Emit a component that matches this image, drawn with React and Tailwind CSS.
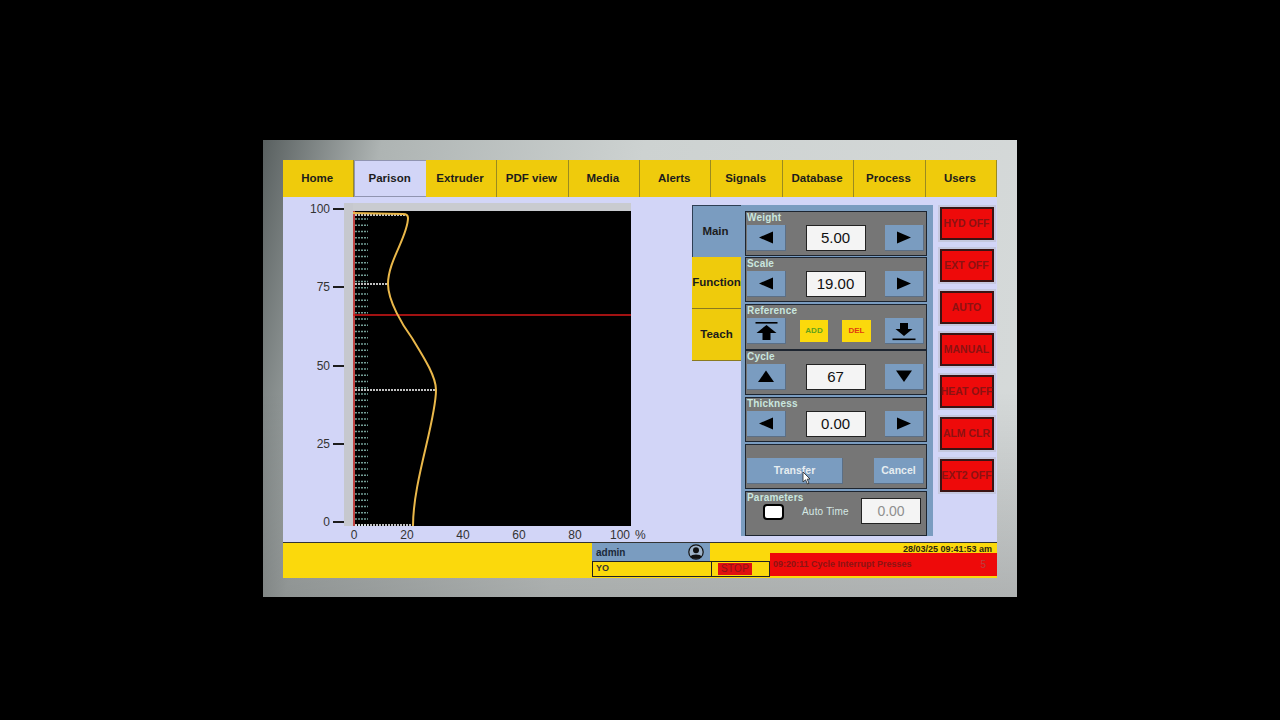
import React from 'react';

const tabs = ['Home', 'Parison', 'Extruder', 'PDF view', 'Media', 'Alerts', 'Signals', 'Database', 'Process', 'Users'];
const sideButtons = ['HYD OFF', 'EXT OFF', 'AUTO', 'MANUAL', 'HEAT OFF', 'ALM CLR', 'EXT2 OFF'];
const yLabels = ['100', '75', '50', '25', '0'];
const dotRows = Array.from({ length: 50 }, (_, i) => 8 + i * 6.25);

function Arrow({ dir }) {
    const shapes = {
        left: <polygon points="1,6.5 15,0.5 15,12.5" />,
        right: <polygon points="15,6.5 1,0.5 1,12.5" />,
        up: <polygon points="8,0.5 16,12 0,12" />,
        down: <polygon points="8,12 16,0.5 0,0.5" />,
    };
    return (
        <svg width="16" height="13" viewBox="0 0 16 13" fill="#000">
            {shapes[dir]}
        </svg>
    );
}

function BlueButton({ children, className = 'w-[39px]' }) {
    return (
        <div className={`${className} h-[26px] flex items-center justify-center bg-[#7a9cc0] border-b border-r border-[#5b6f86] border-t-[#8fa9c8] text-[10.5px] font-bold text-[#e6edf0]`}>
            {children}
        </div>
    );
}

function Section({ label, className = '', children }) {
    return (
        <div className={`h-[45px] bg-[#767676] border border-[#1d2530] pl-[1px] pr-[2px] ${className}`}>
            <div className="h-[13px] text-[10px] leading-[11px] font-bold text-[#c9e6df] tracking-[0.2px]">{label}</div>
            {children}
        </div>
    );
}

function ValueRow({ value, left = 'left', right = 'right' }) {
    return (
        <div className="flex items-center justify-between">
            <BlueButton><Arrow dir={left} /></BlueButton>
            <div className="w-[60px] h-[26px] flex items-center justify-center bg-[#f4f4f4] border border-[#222] text-[15px] text-[#111]">{value}</div>
            <BlueButton><Arrow dir={right} /></BlueButton>
        </div>
    );
}

function Plot() {
    return (
        <svg width="278" height="315" viewBox="0 0 278 315" className="block bg-black">
            {dotRows.map((y) => (
                <line key={y} x1="2" x2="15" y1={y} y2={y} stroke="#8fc5bb" strokeWidth="1.4" strokeDasharray="2 1" opacity="0.8" />
            ))}
            <line x1="1" x2="1" y1="0" y2="315" stroke="#c04444" strokeWidth="2" />
            <line x1="0" x2="278" y1="104" y2="104" stroke="#d81818" strokeWidth="1.3" />
            <line x1="2" x2="54" y1="4" y2="4" stroke="#fff" strokeWidth="1.3" strokeDasharray="2 1" />
            <line x1="2" x2="35" y1="73" y2="73" stroke="#fff" strokeWidth="1.3" strokeDasharray="2 1" />
            <line x1="2" x2="83" y1="179" y2="179" stroke="#fff" strokeWidth="1.3" strokeDasharray="2 1" />
            <line x1="2" x2="59" y1="314" y2="314" stroke="#fff" strokeWidth="1.3" strokeDasharray="2 1" />
            <path
                d="M0 2 L50 3 Q55 3 55 7 C55 25 35 50 35 73 C35 90 50 115 59 127 C70 145 83 165 83 179 C83 210 60 270 60 315"
                fill="none"
                stroke="#eab84a"
                strokeWidth="2"
            />
        </svg>
    );
}

function Chart() {
    return (
        <div className="w-[409px] pt-[5px] text-[12px] text-[#333]">
            <div className="flex">
                <div className="w-[61px] h-[327px] flex flex-col justify-between">
                    {yLabels.map((l) => (
                        <div key={l} className="h-[14px] flex items-center justify-end">
                            <span className="leading-[14px]">{l}</span>
                            <span className="ml-[3px] w-[11px] h-[2px] bg-[#1d1d1d]"></span>
                        </div>
                    ))}
                </div>
                <div className="w-[9px] mt-[1px] mb-[3px] bg-[#c6c8ce]"></div>
                <div>
                    <div className="h-[8px] mt-[1px] w-[278px] bg-[#c9cbd0]"></div>
                    <Plot />
                </div>
            </div>
            <div className="flex pl-[57px] -mt-[1px] leading-[14px]">
                <div className="w-[28px] text-center">0</div>
                <div className="w-[78px] text-center">20</div>
                <div className="w-[34px] text-center">40</div>
                <div className="w-[78px] text-center">60</div>
                <div className="w-[34px] text-center">80</div>
                <div className="w-[30px] ml-[13px] text-center">100</div>
                <div className="w-[10px] text-center">%</div>
            </div>
        </div>
    );
}

function ControlPanel() {
    return (
        <div className="w-[192px] h-[331px] mt-[8px] bg-[#7a9cc0] pl-[4px] pt-[6px]">
            <div className="w-[182px]">
                <Section label="Weight"><ValueRow value="5.00" /></Section>
                <Section label="Scale" className="mt-[1px]"><ValueRow value="19.00" /></Section>
                <Section label="Reference" className="mt-[2px] h-[46px]">
                    <div className="flex items-center justify-between">
                        <BlueButton>
                            <svg width="26" height="22" viewBox="0 0 26 22" fill="#000">
                                <rect x="2.5" y="2" width="22" height="1.6" />
                                <polygon points="13.5,5 23.5,13 17.5,13 17.5,20 9.5,20 9.5,13 3.5,13" />
                            </svg>
                        </BlueButton>
                        <div className="w-[28px] h-[22px] flex items-center justify-center bg-[#fbd90c] text-[8px] font-bold text-[#5fa21c]">ADD</div>
                        <div className="w-[29px] h-[22px] flex items-center justify-center bg-[#fbd90c] text-[8px] font-bold text-[#e23a10]">DEL</div>
                        <BlueButton>
                            <svg width="26" height="22" viewBox="0 0 26 22" fill="#000">
                                <polygon points="13,16 21.5,9 17,9 17,3 9,3 9,9 4.5,9" />
                                <rect x="1.5" y="18.5" width="23" height="1.6" />
                            </svg>
                        </BlueButton>
                    </div>
                </Section>
                <Section label="Cycle"><ValueRow value="67" left="up" right="down" /></Section>
                <Section label="Thickness" className="mt-[2px]"><ValueRow value="0.00" /></Section>
                <div className="mt-[2px] h-[45px] bg-[#767676] border border-[#1d2530] pl-[1px] pr-[2px] pt-[13px] flex items-start justify-between">
                    <div className="relative">
                        <BlueButton className="w-[96px]">Transfer</BlueButton>
                        <svg width="9" height="14" viewBox="0 0 9 14" className="absolute left-[55px] top-[13px]">
                            <path d="M1 1 L1 11 L3.5 8.8 L5.5 13 L7 12.3 L5.2 8.2 L8 8 Z" fill="#fff" stroke="#222" strokeWidth="0.8" />
                        </svg>
                    </div>
                    <BlueButton className="w-[50px]">Cancel</BlueButton>
                </div>
                <Section label="Parameters" className="mt-[2px]">
                    <div className="flex items-center -mt-[7px] h-[26px]">
                        <div className="ml-[16px] mt-[2px] w-[21px] h-[16px] bg-white border-2 border-black rounded-[4px]"></div>
                        <div className="ml-[18px] text-[10px] text-[#d5e8e4] tracking-[0.2px]">Auto Time</div>
                        <div className="ml-auto mr-[3px] w-[60px] h-[26px] flex items-center justify-center bg-[#f4f4f4] border border-[#222] text-[14px] text-[#8f8f8f]">0.00</div>
                    </div>
                </Section>
            </div>
        </div>
    );
}

function Footer() {
    return (
        <div className="h-[36px] flex bg-[#fbd90c] border-t border-[#333]">
            <div className="w-[309px]"></div>
            <div className="w-[178px] flex flex-col">
                <div className="w-[118px] h-[18px] flex items-center justify-between bg-[#7a9cc0] pl-[4px] pr-[5px] text-[10px] font-bold text-[#1c2a3a]">
                    <span>admin</span>
                    <svg width="18" height="16" viewBox="0 0 18 16">
                        <circle cx="9" cy="8" r="7.2" fill="#9fb3c9" stroke="#111" strokeWidth="1.2" />
                        <circle cx="9" cy="6.2" r="3" fill="#111" />
                        <path d="M3.5 13 C4 9.8 14 9.8 14.5 13 C12 15.4 6 15.4 3.5 13 Z" fill="#111" />
                    </svg>
                </div>
                <div className="h-[16px] flex border border-[#222]">
                    <div className="w-[119px] pl-[3px] text-[9px] leading-[13px] font-bold text-[#333] border-r border-[#222]">YO</div>
                    <div className="flex-1 flex items-start pt-[1px] pl-[6px]">
                        <div className="w-[34px] h-[12px] bg-[#e01010] text-center text-[10px] leading-[12px] tracking-[0.3px] text-[#8f1414]">STOP</div>
                    </div>
                </div>
            </div>
            <div className="flex-1 flex flex-col">
                <div className="h-[10px] pr-[5px] text-right text-[9px] leading-[12px] font-bold text-[#2a2410]">28/03/25 09:41:53 am</div>
                <div className="h-[23px] flex items-center justify-between bg-[#ee0a0a] pl-[3px] pr-[11px] text-[9px] font-bold text-[#8c1414]">
                    <span>09:20:11 Cycle Interrupt Presses</span>
                    <span className="text-[10px] font-normal text-[#b84040]">5</span>
                </div>
            </div>
        </div>
    );
}

export default function App() {
    return (
        <div className="h-[720px] bg-black pl-[263px] pt-[140px] overflow-hidden font-['Liberation_Sans',Arial,sans-serif]">
            <div className="w-[754px] h-[457px] pl-[20px] pt-[20px] bg-[linear-gradient(180deg,rgba(0,0,0,0)_55%,rgba(0,0,0,0.18)_100%),linear-gradient(102deg,#596060_0%,#aeb4b3_14%,#cdd2d1_45%,#d6dada_100%)]">
                <div className="w-[714px] h-[418px] flex flex-col bg-[#d2d5f7]">
                    <div className="h-[37px] flex">
                        {tabs.map((t) => (
                            <div
                                key={t}
                                className={`flex-1 flex items-center justify-center pr-[2px] text-[11.5px] font-bold text-[#1c1c1c] ${t === 'Parison' ? 'bg-[#d2d5f7] border-t border-l border-b border-[#9094b0]' : 'bg-[#efcb0c] border-r border-[#9a8a20]'}`}
                            >
                                {t}
                            </div>
                        ))}
                    </div>
                    <div className="h-[345px] flex">
                        <Chart />
                        <div className="w-[49px] mt-[8px] h-[156px] flex flex-col text-[11.5px] font-bold text-[#1c1c1c]">
                            <div className="h-[52px] flex items-center justify-center pr-[3px] bg-[#7a9cc0] border-t border-l border-[#2e3f55]">Main</div>
                            <div className="h-[52px] flex items-center justify-center bg-[#efcb0c] border-b border-[#8a7a20]">Function</div>
                            <div className="h-[52px] flex items-center justify-center bg-[#efcb0c] border-b border-[#8a7a20]">Teach</div>
                        </div>
                        <ControlPanel />
                        <div className="ml-[5px] mt-[8px] flex flex-col gap-[5px]">
                            {sideButtons.map((b) => (
                                <div key={b} className="w-[58px] h-[37px] border-2 border-[#c4c7de]">
                                    <div className="h-full flex items-center justify-center pr-[1px] bg-[#ee0a0a] border-2 border-[#3a1414] text-[10.5px] font-bold text-[#8c1212] whitespace-nowrap">
                                        {b}
                                    </div>
                                </div>
                            ))}
                        </div>
                    </div>
                    <Footer />
                </div>
            </div>
        </div>
    );
}
